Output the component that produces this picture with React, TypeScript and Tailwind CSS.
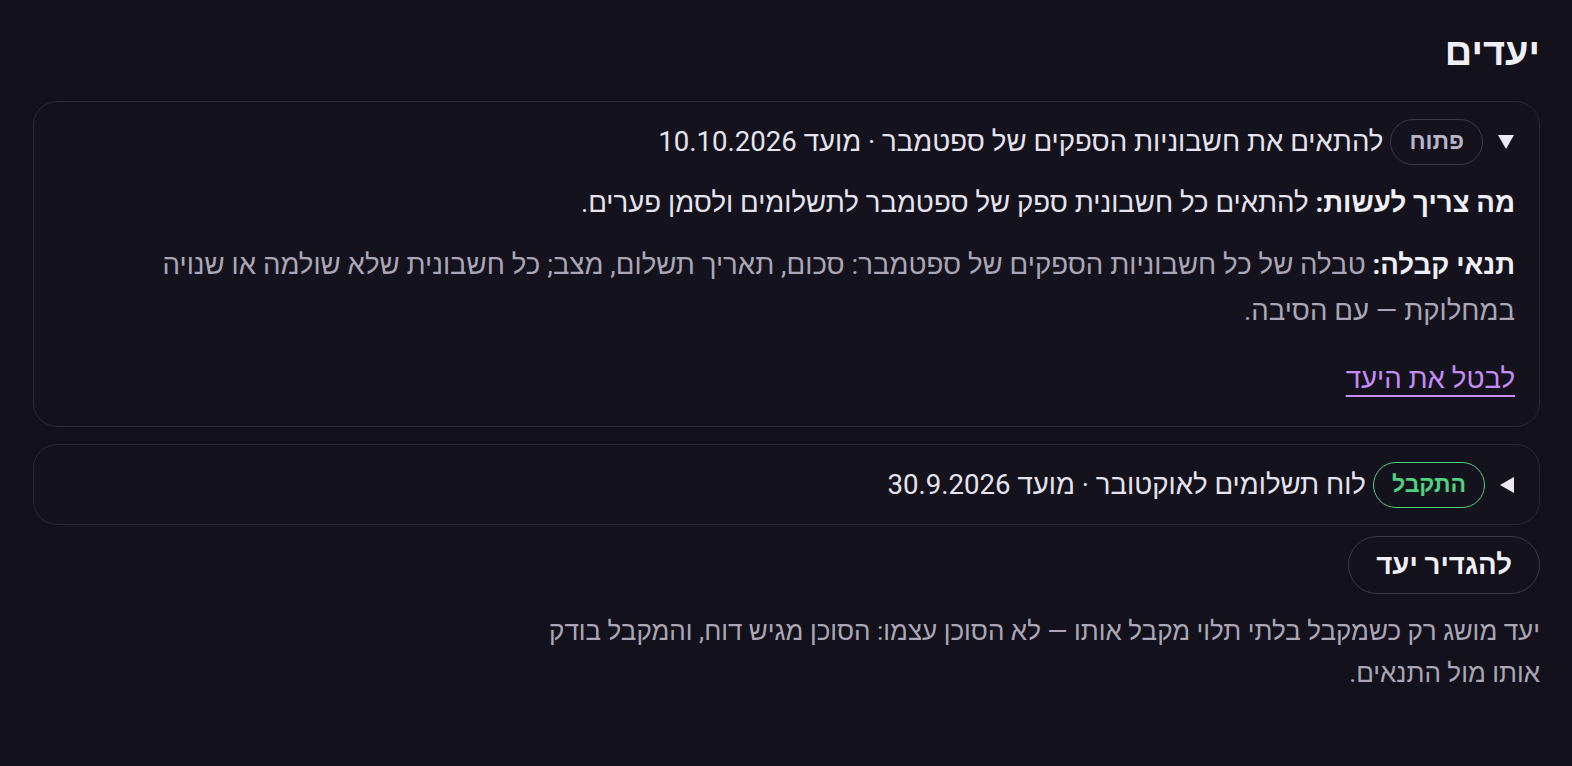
import React from "react";

function TriDown() {
  return (
    <svg width="18" height="16" viewBox="0 0 18 16" className="shrink-0">
      <path d="M1 1 L17 1 L9 15 Z" fill="#ece9f3" />
    </svg>
  );
}
function TriLeft() {
  return (
    <svg width="16" height="18" viewBox="0 0 16 18" className="shrink-0">
      <path d="M15 1 L15 17 L1 9 Z" fill="#ece9f3" />
    </svg>
  );
}

export default function App() {
  return (
    <div
      dir="rtl"
      className="min-h-screen bg-[#13111b] pl-[33px] pr-[32px] pt-[24px] text-[#e6e3ee]"
      style={{ fontFamily: 'Roboto, "Noto Sans", "Liberation Sans", sans-serif' }}
    >
      <h2 className="text-[38px] font-black leading-[56px] text-[#f1eff6]">יעדים</h2>

      <div className="mt-[21px] flex flex-col gap-[17px]">
        <div className="rounded-[24px] border-[1.5px] border-[#2b2935] bg-[#14121c] px-[24px] pt-[16px] pb-[24px]">
          <div className="flex items-center gap-[7px] text-[27.6px] leading-[47px]">
            <span className="ml-[7px]"><TriDown /></span>
            <span className="rounded-full border-[1.5px] border-[#3b3946] px-[18px] text-[23px] font-bold leading-[44px] text-[#b9b5c6]">
              פתוח
            </span>
            <span>להתאים את חשבוניות הספקים של ספטמבר · מועד 10.10.2026</span>
          </div>
          <p className="mt-[15px] text-[27.6px] leading-[46px]">
            <b className="font-bold text-[#f1eff6]">מה צריך לעשות:</b> להתאים כל חשבונית ספק של ספטמבר לתשלומים ולסמן פערים.
          </p>
          <p className="mt-[16px] text-[27.6px] leading-[46px] text-[#aaa6b6]">
            <b className="font-bold text-[#f1eff6]">תנאי קבלה:</b> טבלה של כל חשבוניות הספקים של ספטמבר: סכום, תאריך תשלום, מצב; כל חשבונית שלא שולמה או שנויה במחלוקת — עם הסיבה.
          </p>
          <div className="mt-[22px]">
            <a
              href="#"
              className="text-[27.6px] leading-[46px] text-[#c58cf5] underline decoration-[2px] underline-offset-[7px]"
            >
              לבטל את היעד
            </a>
          </div>
        </div>

        <div className="rounded-[24px] border-[1.5px] border-[#2b2935] bg-[#14121c] px-[24px] py-[16px]">
          <div className="flex items-center gap-[7px] text-[27.6px] leading-[47px]">
            <span className="ml-[7px]"><TriLeft /></span>
            <span className="rounded-full border-[1.5px] border-[#4fd07e] px-[18px] text-[23px] font-bold leading-[44px] text-[#4fd07e]">
              התקבל
            </span>
            <span>לוח תשלומים לאוקטובר · מועד 30.9.2026</span>
          </div>
        </div>
      </div>

      <div className="mt-[11px] flex">
        <button className="rounded-full border-[1.5px] border-[#3b3946] bg-[#13111b] px-[27px] text-[27.6px] font-bold leading-[56px] text-[#f1eff6]">
          להגדיר יעד
        </button>
      </div>

      <p className="mt-[16px] max-w-[995px] text-[26px] leading-[42px] text-[#aaa6b6]">
        יעד מושג רק כשמקבל בלתי תלוי מקבל אותו — לא הסוכן עצמו: הסוכן מגיש דוח, והמקבל בודק אותו מול התנאים.
      </p>
    </div>
  );
}
